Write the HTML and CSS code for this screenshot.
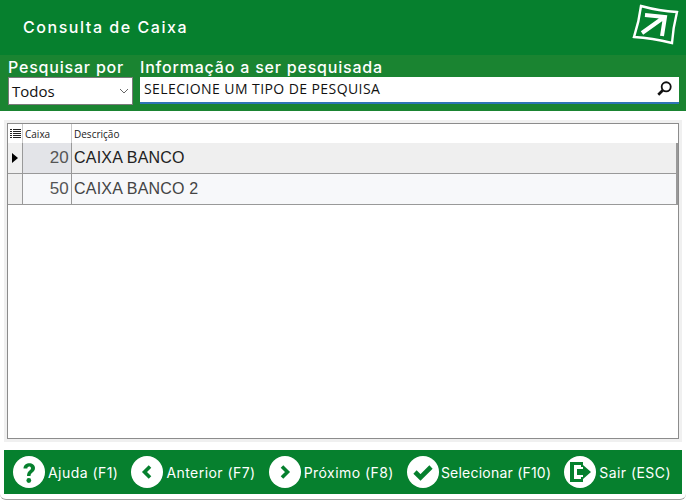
FILE: index.html
```html
<!DOCTYPE html>
<html lang="pt-BR">
<head>
    <meta charset="UTF-8">
    <meta name="viewport" content="width=device-width, initial-scale=1.0">
    <title>Consulta de Caixa</title>
    <link rel="stylesheet" href="styles.css">
</head>
<body>
    <div class="window">
        <header class="top">
            <h1>Consulta de Caixa</h1>
            <svg class="logo" width="48" height="46" viewBox="0 0 48 46">
                <path d="M9 2 Q27 7 45 8 Q41 24 40 39 Q20 34 2 33 Q7 18 9 2 Z" fill="none" stroke="#fff" stroke-width="2.4"/>
                <path d="M10 29 L31 14 M13 11 L33 13 L30 32" fill="none" stroke="#fff" stroke-width="4"/>
            </svg>
        </header>

        <div class="search">
            <div class="field field-type">
                <label>Pesquisar por</label>
                <div class="select">
                    <span>Todos</span>
                    <svg width="10" height="6" viewBox="0 0 10 6"><path d="M1 1 L5 5 L9 1" fill="none" stroke="#666" stroke-width="1"/></svg>
                </div>
            </div>
            <div class="field field-info">
                <label>Informação a ser pesquisada</label>
                <div class="input">
                    <span>SELECIONE UM TIPO DE PESQUISA</span>
                    <svg width="17" height="17" viewBox="0 0 15 15">
                        <circle cx="9" cy="6" r="4" fill="none" stroke="#111" stroke-width="1.6"/>
                        <path d="M6 9 L2 13" stroke="#111" stroke-width="2.4"/>
                    </svg>
                </div>
            </div>
        </div>

        <div class="panel">
            <div class="grid">
                <div class="row head">
                    <div class="mark">
                        <svg width="11" height="9" viewBox="0 0 11 9">
                            <path d="M0 .5h2M3 .5h8M0 2.5h2M3 2.5h8M0 4.5h2M3 4.5h8M0 6.5h2M3 6.5h8M0 8.5h2M3 8.5h8" stroke="#222" stroke-width="1"/>
                        </svg>
                    </div>
                    <div class="code">Caixa</div>
                    <div class="desc">Descrição</div>
                </div>
                <div class="row item current">
                    <div class="mark"><svg width="6" height="10" viewBox="0 0 6 10"><path d="M0 0 L6 5 L0 10 Z" fill="#000"/></svg></div>
                    <div class="code">20</div>
                    <div class="desc">CAIXA BANCO</div>
                </div>
                <div class="row item">
                    <div class="mark"></div>
                    <div class="code">50</div>
                    <div class="desc">CAIXA BANCO 2</div>
                </div>
            </div>
        </div>

        <footer class="actions">
            <button>
                <span class="ico"><svg width="32" height="32" viewBox="0 0 32 32"><path d="M10.5 12.5 C10.5 5.5 22 5.5 22 12 C22 16.5 17.5 16 17.5 20 L14 20 C14 14.5 18 14.5 18 12.2 C18 9.8 14.3 9.8 14.3 12.5 Z" fill="#06802e"/><circle cx="15.8" cy="24.5" r="2.4" fill="#06802e"/></svg></span>
                Ajuda (F1)
            </button>
            <button>
                <span class="ico"><svg width="32" height="32" viewBox="0 0 32 32"><path d="M19 10.5 L13.5 16 L19 21.5" fill="none" stroke="#06802e" stroke-width="3.6"/></svg></span>
                Anterior (F7)
            </button>
            <button>
                <span class="ico"><svg width="32" height="32" viewBox="0 0 32 32"><path d="M13 10.5 L18.5 16 L13 21.5" fill="none" stroke="#06802e" stroke-width="3.6"/></svg></span>
                Próximo (F8)
            </button>
            <button class="tight">
                <span class="ico"><svg width="32" height="32" viewBox="0 0 32 32"><path d="M8 16 L13.5 21.5 L24 11" fill="none" stroke="#06802e" stroke-width="4.6"/></svg></span>
                Selecionar (F10)
            </button>
            <button>
                <span class="ico"><svg width="32" height="32" viewBox="0 0 32 32"><path d="M6 6 H19 V11 H17 V9 H10 V23 H17 V21 H19 V26 H6 Z" fill="#06802e"/><path d="M13 13 H19 V9 L27 16 L19 23 V19 H13 Z" fill="#06802e"/></svg></span>
                Sair (ESC)
            </button>
        </footer>
    </div>
</body>
</html>
```

FILE: styles.css
```css
*{
    margin: 0;
    padding: 0;
    box-sizing: border-box;
}
body{
    background: #fff;
    font-family: 'Inter', sans-serif;
}
.window{
    width: 686px;
    height: 500px;
    display: flex;
    flex-direction: column;
    overflow: hidden;
    border-bottom: 1px solid #a0a0a0;
    border-radius: 0 0 6px 6px;
}
.top{
    height: 55px;
    background: #06802e;
    display: flex;
    align-items: center;
    justify-content: space-between;
    padding: 0 6px 2px 23px;
}
.top h1{
    color: #fff;
    font-size: 16px;
    font-weight: 500;
    letter-spacing: 1.55px;
}
.search{
    height: 56px;
    background: #1a8431;
    display: flex;
    gap: 7px;
    padding: 2px 7px 0 8px;
}
.field label{
    display: block;
    color: #fff;
    font-size: 16px;
    font-weight: 500;
    letter-spacing: .8px;
    line-height: 20px;
}
.field-type{
    width: 125px;
}
.field-info{
    flex: 1;
}
.select{
    height: 28px;
    background: #fff;
    border: 1px solid #7a7a7a;
    display: flex;
    align-items: center;
    justify-content: space-between;
    padding: 0 3px 0 3px;
    font-family: 'Open Sans', sans-serif;
    font-size: 15px;
    color: #111;
}
.input{
    height: 27px;
    background: #fff;
    border-bottom: 2px solid #2f74b5;
    display: flex;
    align-items: center;
    justify-content: space-between;
    padding: 0 6px 2px 4px;
    font-family: 'Open Sans', sans-serif;
    font-size: 14px;
    letter-spacing: .42px;
    color: #111;
}
.panel{
    height: 339px;
    padding: 12px 7px 0;
    background: #fff;
}
.panel .grid{
    height: 316px;
    border: 1px solid #8c8c8c;
    box-shadow: 0 0 0 3px #f0f0f0;
    background: #fff;
}
.row{
    display: flex;
}
.row.head{
    height: 19px;
    font-family: 'Open Sans', sans-serif;
    font-size: 10px;
    color: #222;
    align-items: stretch;
}
.mark{
    width: 14px;
    display: flex;
    align-items: center;
    justify-content: center;
    flex-shrink: 0;
}
.code{
    width: 49px;
    border-left: 1px solid #c9c9c9;
    flex-shrink: 0;
}
.desc{
    flex: 1;
    border-left: 1px solid #c9c9c9;
    padding-left: 2px;
}
.head .code, .head .desc{
    display: flex;
    align-items: center;
    padding-left: 2px;
}
.item{
    height: 31px;
    line-height: 29px;
    font-family: 'Liberation Sans', sans-serif;
    font-size: 16px;
    letter-spacing: .2px;
    color: #444;
    border-bottom: 1px solid #999;
    border-right: 2px solid #999;
    background: #f7f8fa;
}
.item .mark{
    background: #f0f0f0;
}
.item .code{
    text-align: right;
    padding-right: 2px;
    border-left: 1px solid #999;
    color: #555;
    font-size: 17px;
}
.item .desc{
    border-left: 1px solid #999;
}
.current{
    background: #efefef;
    color: #222;
}
.current .code{
    background: #e3e4e8;
}
.actions{
    height: 44px;
    margin: 0 4px;
    background: #06802e;
    display: flex;
    align-items: center;
    gap: 13px;
    padding: 0 0 0 9px;
}
.actions button{
    border: 0;
    background: none;
    display: flex;
    align-items: center;
    gap: 3px;
    color: #fff;
    font-family: 'Inter', sans-serif;
    font-size: 14px;
    letter-spacing: .45px;
}
.actions button.tight{
    gap: 2px;
    letter-spacing: .22px;
}
.ico{
    width: 32px;
    height: 32px;
    background: #fff;
    border-radius: 50%;
    display: block;
}
.ico svg{
    display: block;
}
```
